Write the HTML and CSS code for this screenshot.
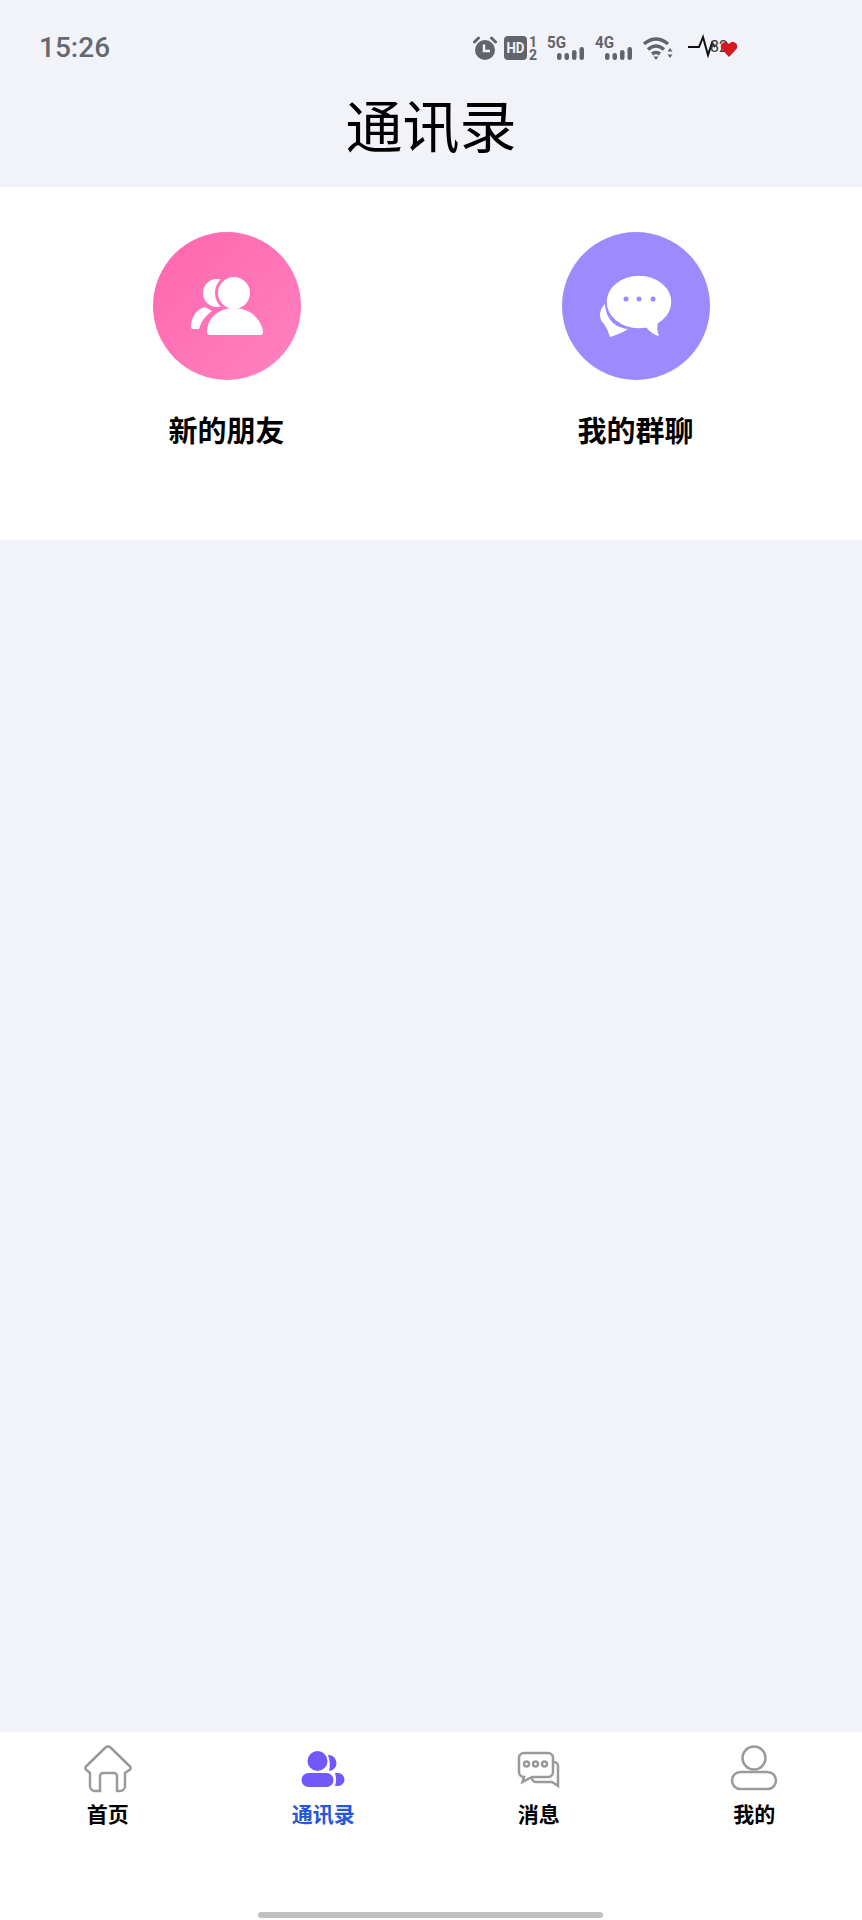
FILE: index.html
```html
<!doctype html>
<html lang="zh">
<head>
  <title>通讯录</title>
  <meta charset="UTF-8">
  <meta name="viewport" content="width=device-width, initial-scale=1">
  <link rel="stylesheet" href="styles.css">
</head>
<body>
  <header class="top">
    <div class="status">
      <span class="time">15:26</span>
      <div class="status-icons">
        <svg class="s-alarm" viewBox="0 0 24 24">
          <circle cx="12" cy="14" r="10"/>
          <path class="hand" d="M11 8.500v6.500h6"/>
          <path class="bell" d="M1.500 6l4-4M22.500 6l-4-4"/>
        </svg>
        <svg class="s-hd" viewBox="0 -4 33 32">
          <rect width="23" height="24" rx="4"/>
          <text class="hd" x="2.500" y="17" textLength="18" lengthAdjust="spacingAndGlyphs">HD</text>
          <text class="sim" x="29" y="11" text-anchor="middle">1</text>
          <text class="sim" x="29" y="24" text-anchor="middle">2</text>
        </svg>
        <svg class="s-net" viewBox="0 -5 37 34">
          <text class="gen" x="0" y="12" textLength="19" lengthAdjust="spacingAndGlyphs">5G</text>
          <rect x="10" y="17" width="4.500" height="7" rx="2.200"/>
          <rect x="17.500" y="17" width="4.500" height="7" rx="2.200"/>
          <rect x="25" y="14" width="4.500" height="10" rx="2.200"/>
          <rect x="32.500" y="11" width="4.500" height="13" rx="2.200"/>
        </svg>
        <svg class="s-net" viewBox="0 -5 37 34">
          <text class="gen" x="0" y="12" textLength="19" lengthAdjust="spacingAndGlyphs">4G</text>
          <rect x="10" y="17" width="4.500" height="7" rx="2.200"/>
          <rect x="17.500" y="17" width="4.500" height="7" rx="2.200"/>
          <rect x="25" y="14" width="4.500" height="10" rx="2.200"/>
          <rect x="32.500" y="11" width="4.500" height="13" rx="2.200"/>
        </svg>
        <svg class="s-wifi" viewBox="0 0 30 24">
          <path class="arc" d="M1 8Q13-2 25 8M5 13.500Q13 6.500 21 13.500M9 18Q13 15 17 18"/>
          <path d="M10.500 20.500h5L13 24zM27 12l2.500 3.500h-5zM27 22l2.500-3.500h-5z"/>
        </svg>
        <svg class="s-heart" viewBox="0 -4 49 32">
          <path class="ecg" d="M0 11H11L15 1L20 19L24 7L27 11"/>
          <text class="rate" x="22" y="16">82</text>
          <path class="red" d="M41 21L33.500 13a4.500 4.500 0 0 1 7.500-5a4.500 4.500 0 0 1 7.500 5z"/>
        </svg>
      </div>
    </div>
    <h1>通讯录</h1>
  </header>

  <section class="entries">
    <div class="entry">
      <svg class="badge" viewBox="0 0 148 148">
        <defs>
          <linearGradient id="pink" x1="0" y1="0" x2="1" y2="1">
            <stop offset="0" stop-color="#ff66ad"/>
            <stop offset="1" stop-color="#ff82c0"/>
          </linearGradient>
        </defs>
        <circle cx="74" cy="74" r="74" fill="url(#pink)"/>
        <circle cx="64" cy="61" r="14" fill="#fff"/>
        <path fill="#fff" d="M38 95C38 85 44 77 52 75L59 79C52 84 48 90 46 97H40a2 2 0 0 1-2-2z"/>
        <circle cx="81" cy="61" r="17.500" fill="#fff" stroke="#ff72b5" stroke-width="3"/>
        <path fill="#fff" d="M57 103H107a3 3 0 0 0 3-3C108 86 96 76 81 76C66 76 54 86 54 100a3 3 0 0 0 3 3z"/>
      </svg>
      <span class="entry-name">新的朋友</span>
    </div>
    <div class="entry">
      <svg class="badge" viewBox="0 0 148 148">
        <circle cx="74" cy="74" r="74" fill="#9d8aff"/>
        <path fill="#fff" d="M43 72C37 78 36 86 42 92L45 97L48 105C54 103 60 101 66 97C56 96 44 90 43 72z"/>
        <ellipse cx="77" cy="70" rx="33" ry="27" fill="#fff" stroke="#9d8aff" stroke-width="1.500"/>
        <path fill="#fff" d="M84 95C88 100 92 103 97 104C95 100 95 95 96 90z"/>
        <circle cx="64" cy="67" r="2.500" fill="#9d8aff"/>
        <circle cx="77" cy="67" r="2.500" fill="#9d8aff"/>
        <circle cx="91" cy="67" r="2.500" fill="#9d8aff"/>
      </svg>
      <span class="entry-name">我的群聊</span>
    </div>
  </section>

  <div class="filler"></div>

  <nav class="tabs">
    <div class="tab">
      <svg class="tab-icon line" viewBox="0 0 48 48">
        <path d="M6 28L2 24.500a2 2 0 0 1 0-3L21.500 2.500a3.500 3.500 0 0 1 5 0L46 21.500a2 2 0 0 1 0 3L41 28V41a5 5 0 0 1-5 5H33V31a3 3 0 0 0-3-3H19a3 3 0 0 0-3 3V46H11a5 5 0 0 1-5-5z"/>
      </svg>
      <span>首页</span>
    </div>
    <div class="tab active">
      <svg class="tab-icon" viewBox="0 0 48 48">
        <circle cx="18.500" cy="16" r="10"/>
        <rect x="2.500" y="28" width="32" height="14" rx="7"/>
        <path d="M29 10A8 8 0 0 1 30 26Q32 18 29 10z"/>
        <path d="M36 28h3a6.500 6.500 0 0 1 0 13h-3Q38 34.500 36 28z"/>
      </svg>
      <span>通讯录</span>
    </div>
    <div class="tab">
      <svg class="tab-icon line" viewBox="0 0 48 48">
        <path d="M9 8H33a5 5 0 0 1 5 5V27a5 5 0 0 1-5 5H17L7.500 37L9 32a5 5 0 0 1-5-5V13a5 5 0 0 1 5-5z"/>
        <path d="M39 17a4 4 0 0 1 4 4V41L37 37H21a4 4 0 0 1-4-4"/>
        <circle cx="11.500" cy="19" r="2.500"/>
        <circle cx="20.500" cy="19" r="2.500"/>
        <circle cx="29.500" cy="19" r="2.500"/>
      </svg>
      <span>消息</span>
    </div>
    <div class="tab">
      <svg class="tab-icon line" viewBox="0 0 48 48">
        <circle cx="24" cy="13" r="11.500"/>
        <rect x="2" y="27" width="44" height="17" rx="8.500"/>
      </svg>
      <span>我的</span>
    </div>
    <div class="home-bar"></div>
  </nav>
</body>
</html>
```

FILE: styles.css
```css
html, body { height: 100% }
body {
  margin: 0;
  display: flex;
  flex-flow: column;
  color: #000;
  background: #f2f3f8;
  font-family: "Noto Sans CJK SC", "Noto Sans", sans-serif }

.top {
  height: 187px;
  padding-top: 34px;
  box-sizing: border-box }
  .status {
    display: flex;
    align-items: center;
    justify-content: space-between;
    height: 28px;
    padding: 0 125px 0 39px }
    .time {
      font: 500 28px/28px Roboto, sans-serif;
      color: #666870 }
    .status-icons {
      display: flex;
      align-items: center;
      gap: 10px;
      fill: #636469 }
      .status-icons svg { display: block }
      .s-alarm { width: 24px; height: 24px; margin-right: -3px }
        .hand { fill: none; stroke: #f2f3f8; stroke-width: 2.500px }
        .bell { fill: none; stroke: #636469; stroke-width: 3px; stroke-linecap: round }
      .s-hd { width: 33px; height: 32px }
        .hd { font: bold 15px Roboto, sans-serif; fill: #f2f3f8 }
        .sim { font: bold 14px Roboto, sans-serif }
      .s-net { width: 37px; height: 34px; margin-right: 1px }
        .gen { font: bold 17px Roboto, sans-serif }
      .s-wifi { width: 30px; height: 24px; margin-right: 5px }
        .arc { fill: none; stroke: #636469; stroke-width: 3.500px }
      .s-heart { width: 49px; height: 32px }
        .ecg { fill: none; stroke: #111; stroke-width: 2px }
        .rate { font: 16px Roboto, sans-serif; fill: #333 }
        .red { fill: #d41920 }
  h1 {
    margin: 23px 0 0;
    text-align: center;
    font-size: 57px;
    font-weight: 400;
    line-height: 76px }

.entries {
  display: grid;
  grid-template-columns: 1fr 1fr;
  height: 353px;
  padding: 45px 22px 0;
  box-sizing: border-box;
  background: #fff }
  .entry {
    display: flex;
    flex-flow: column;
    align-items: center }
  .badge { width: 148px; height: 148px; display: block }
  .entry-name {
    margin-top: 29px;
    font-size: 29px;
    font-weight: bold;
    line-height: 40px }

.filler { flex: 1 }

.tabs {
  position: relative;
  display: grid;
  grid-template-columns: repeat(4, 1fr);
  height: 188px;
  padding-top: 13px;
  box-sizing: border-box;
  background: #fff }
  .tab {
    display: flex;
    flex-flow: column;
    align-items: center;
    font-size: 21px;
    font-weight: bold;
    line-height: 30px }
  .tab.active { color: #2458d8 }
  .tab-icon {
    width: 48px;
    height: 48px;
    margin-bottom: 5px;
    fill: #7258f8 }
  .line {
    fill: none;
    stroke: #9a9a9a;
    stroke-width: 2.500px }
  .home-bar {
    position: absolute;
    left: 258px;
    bottom: 2px;
    width: 345px;
    height: 6px;
    border-radius: 3px;
    background: #c0c0c0 }
```
